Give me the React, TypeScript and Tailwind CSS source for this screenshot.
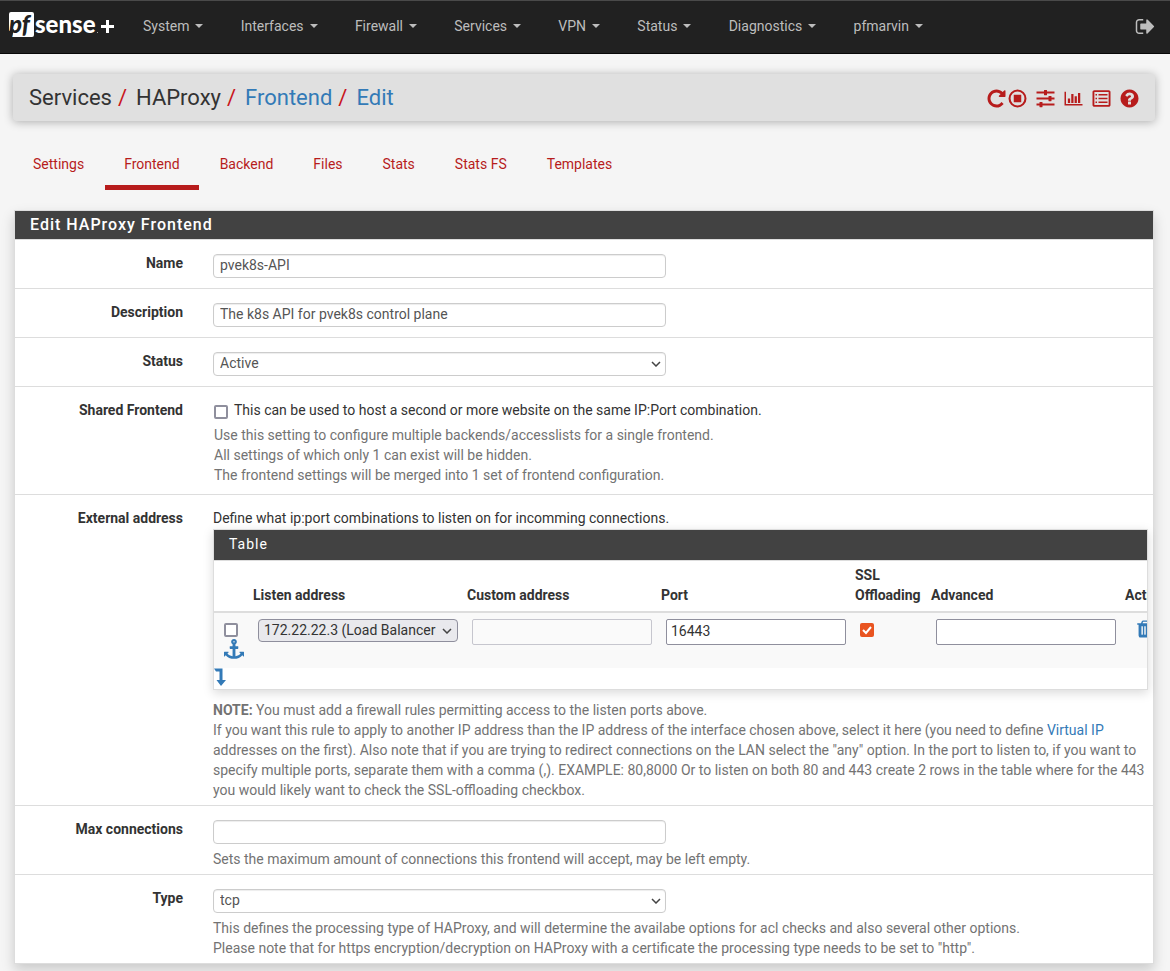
import type { ReactNode } from 'react';

const menus = ['System', 'Interfaces', 'Firewall', 'Services', 'VPN', 'Status', 'Diagnostics', 'pfmarvin'];
const tabs = ['Settings', 'Frontend', 'Backend', 'Files', 'Stats', 'Stats FS', 'Templates'];

const icons = {
    signOut: 'M704 1440q0 4 1 20t.5 26.5-3 23.5-10 19.5-20.5 6.5h-320q-119 0-203.5-84.5t-84.5-203.5v-704q0-119 84.5-203.5t203.5-84.5h320q13 0 22.5 9.5t9.5 22.5q0 4 1 20t.5 26.5-3 23.5-10 19.5-20.5 6.5h-320q-66 0-113 47t-47 113v704q0 66 47 113t113 47h312l11.5 1 11.5 3 8 5.5 7 9 2 13.5zm928-544q0 26-19 45l-544 544q-19 19-45 19t-45-19-19-45v-288h-448q-26 0-45-19t-19-45v-384q0-26 19-45t45-19h448v-288q0-26 19-45t45-19 45 19l544 544q19 19 19 45z',
    repeat: 'M1664 256v448q0 26-19 45t-45 19h-448q-42 0-59-40-17-39 14-69l138-138q-148-137-349-137-104 0-198.5 40.5t-163.5 109.5-109.5 163.5-40.5 198.5 40.5 198.5 109.5 163.5 163.5 109.5 198.5 40.5q119 0 225-52t179-147q7-10 23-12 15 0 25 9l137 138q9 8 9.5 20.5t-7.5 22.5q-109 132-264 204.5t-327 72.5q-156 0-298-61t-245-164-164-245-61-298 61-298 164-245 245-164 298-61q147 0 284.5 55.5t244.5 156.5l130-129q29-31 70-14 39 17 39 59z',
    stop: 'M1216 608v576q0 14-9 23t-23 9h-576q-14 0-23-9t-9-23v-576q0-14 9-23t23-9h576q14 0 23 9t9 23zM896 128a768 768 0 1 0 0 1536a768 768 0 1 0 0-1536zM896 304a592 592 0 1 1 0 1184a592 592 0 1 1 0-1184z',
    sliders: 'M128 299h640v-107q0-32 32-32h192q32 0 32 32v107h640v170h-640v107q0 32-32 32h-192q-32 0-32-32v-107h-640zM128 811h1024v-107q0-32 32-32h192q32 0 32 32v107h256v170h-256v107q0 32-32 32h-192q-32 0-32-32v-107h-1024zM128 1323h256v-107q0-32 32-32h192q32 0 32 32v107h1024v170h-1024v107q0 32-32 32h-192q-32 0-32-32v-107h-256z',
    chart: 'M608 896v384h-192v-384zM896 512v768h-192v-768zM1184 704v576h-192v-576zM1472 416v864h-192v-864zM1664 1366v128h-1536v-1174h128v1046z',
    list: 'M288 192h1216q66 0 113 47t47 113v1088q0 66-47 113t-113 47h-1216q-66 0-113-47t-47-113v-1088q0-66 47-113t113-47zM288 336v1120h1216v-1120zM384 512h128v128h-128zM384 832h128v128h-128zM384 1152h128v128h-128zM640 512h768v128h-768zM640 832h768v128h-768zM640 1152h768v128h-768z',
    help: 'M1024 1376v-192q0-14-9-23t-23-9h-192q-14 0-23 9t-9 23v192q0 14 9 23t23 9h192q14 0 23-9t9-23zm256-672q0-88-55.5-163t-138.5-116-170-41q-243 0-371 213-15 24 8 42l132 100q7 6 19 6 16 0 25-12 53-68 86-92 34-24 86-24 48 0 85.5 26t37.5 59q0 38-20 61t-68 45q-63 28-115.5 86.5t-52.5 125.5v36q0 14 9 23t23 9h192q14 0 23-9t9-23q0-19 21.5-49.5t54.5-49.5q32-18 49-28.5t46-35 44.5-48 28-60.5 12.5-81zm384 192q0 209-103 385.5t-279.5 279.5-385.5 103-385.5-103-279.5-279.5-103-385.5 103-385.5 279.5-279.5 385.5-103 385.5 103 279.5 279.5 103 385.5z',
    anchor: 'M960 256q0-26-19-45t-45-19-45 19-19 45 19 45 45 19 45-19 19-45zm832 928v352q0 22-20 30-8 2-12 2-13 0-23-9l-93-93q-119 143-318.5 226.5t-429.5 83.5-429.5-83.5-318.5-226.5l-93 93q-9 9-23 9-4 0-12-2-20-8-20-30v-352q0-14 9-23t23-9h352q22 0 30 20 8 19-7 35l-100 100q67 91 189.5 153.5t271.5 82.5v-647h-192q-26 0-45-19t-19-45v-128q0-26 19-45t45-19h192v-163q-58-34-93-92.5t-35-128.5q0-106 75-181t181-75 181 75 75 181q0 70-35 128.5t-93 92.5v163h192q26 0 45 19t19 45v128q0 26-19 45t-45 19h-192v647q149-20 271.5-82.5t189.5-153.5l-100-100q-15-16-7-35 8-20 30-20h352q14 0 23 9t9 23z',
    trash: 'M704 1376v-704q0-14-9-23t-23-9h-64q-14 0-23 9t-9 23v704q0 14 9 23t23 9h64q14 0 23-9t9-23zm256 0v-704q0-14-9-23t-23-9h-64q-14 0-23 9t-9 23v704q0 14 9 23t23 9h64q14 0 23-9t9-23zm256 0v-704q0-14-9-23t-23-9h-64q-14 0-23 9t-9 23v704q0 14 9 23t23 9h64q14 0 23-9t9-23zm-544-992h448l-48-117q-7-9-17-11h-317q-10 2-17 11zm928 32v64q0 14-9 23t-23 9h-96v948q0 83-47 143.5t-113 60.5h-832q-66 0-113-58.5t-47-141.5v-952h-96q-14 0-23-9t-9-23v-64q0-14 9-23t23-9h309l70-167q15-37 54-63t79-26h320q40 0 79 26t54 63l70 167h309q14 0 23 9t9 23z',
};

const shortcuts = [
    { icon: icons.stop, label: 'Stop service' },
    { icon: icons.sliders, label: 'Related settings' },
    { icon: icons.chart, label: 'Related status' },
    { icon: icons.list, label: 'Related log entries' },
    { icon: icons.help, label: 'Help' },
];

const inputClass = 'block h-6 w-full max-w-[453px] rounded border border-[#ccc] bg-white px-1.5 pb-0.5 text-sm text-[#555] shadow-[inset_0_1px_1px_rgba(0,0,0,0.075)]';
const checkboxClass = 'block size-3.5 shrink-0 appearance-none rounded-xs border-2 border-[#8f8f9d] bg-white';

function Icon({ d, className }: { d: string; className: string }) {
    return (
        <svg viewBox="0 0 1792 1792" fill="currentColor" fillRule="evenodd" className={className} aria-hidden="true">
            <path d={d} />
        </svg>
    );
}

function Chevron({ className }: { className: string }) {
    return (
        <svg viewBox="0 0 10 6" fill="none" stroke="#444" strokeWidth="1.5" className={className} aria-hidden="true">
            <path d="M1 1l4 4 4-4" />
        </svg>
    );
}

function Slash() {
    return <span className="px-1.5 text-[#c9151b]">/</span>;
}

function Logo() {
    return (
        <svg viewBox="0 0 108 36" className="h-9 w-[108px] overflow-visible" role="img" aria-label="pfSense plus">
            <path d="M3 4h21q2 0 2 2v21q0 2-2 2H4l2-8-5 2V6q0-2 2-2z" fill="#fff" />
            <text x="1" y="25" fontFamily="Lato, sans-serif" fontWeight="900" fontStyle="italic" fontSize="24" fill="#212121">pf</text>
            <text x="27" y="25" fontFamily="Lato, sans-serif" fontWeight="900" fontSize="24" fill="#fff">sense</text>
            <path d="M89 24h1v1h-1z" fill="#aaa" />
            <path d="M98 12h3v5h5v3h-5v5h-3v-5h-5v-3h5z" fill="#fff" />
        </svg>
    );
}

function FormRow({ label, htmlFor, children }: { label: string; htmlFor: string; children: ReactNode }) {
    return (
        <div className="grid grid-cols-[168px_minmax(0,1fr)] gap-[30px] border-b border-[#ddd] pr-[5px] last:border-b-0">
            <label htmlFor={htmlFor} className="pt-[13px] text-right font-bold">{label}</label>
            {children}
        </div>
    );
}

function SelectField({ id, value }: { id: string; value: string }) {
    return (
        <div className="relative max-w-[453px]">
            <select id={id} className={`${inputClass} appearance-none`}>
                <option>{value}</option>
            </select>
            <Chevron className="pointer-events-none absolute top-[9px] right-[5px] h-1.5 w-2.5" />
        </div>
    );
}

function AddressTable() {
    return (
        <div className="mt-px overflow-hidden border border-[#ddd] shadow-[0_3px_10px_rgba(0,0,0,0.15)]">
            <h3 className="border-b border-[#ddd] bg-[#424242] px-[15px] pt-1 pb-1.5 tracking-[1px] text-white">Table</h3>
            <table className="w-[974px] table-fixed border-collapse text-left">
                <colgroup>
                    <col className="w-[34px]" />
                    <col className="w-[214px]" />
                    <col className="w-[194px]" />
                    <col className="w-[194px]" />
                    <col className="w-[76px]" />
                    <col className="w-[194px]" />
                    <col className="w-[68px]" />
                </colgroup>
                <thead>
                    <tr className="border-b-2 border-[#ddd] align-bottom">
                        <th />
                        <th className="px-[5px] pt-1 pb-1.5">Listen address</th>
                        <th className="px-[5px] pt-1 pb-1.5">Custom address</th>
                        <th className="px-[5px] pt-1 pb-1.5">Port</th>
                        <th className="px-[5px] pt-1 pb-1.5">SSL Offloading</th>
                        <th className="px-[5px] pt-1 pb-1.5">Advanced</th>
                        <th className="px-[5px] pt-1 pb-1.5">Actions</th>
                    </tr>
                </thead>
                <tbody>
                    <tr className="h-14 bg-[#f9f9f9] align-top">
                        <td className="pt-2.5 pl-2.5">
                            <input type="checkbox" aria-label="Select row" className={checkboxClass} />
                            <button type="button" aria-label="Move checked rows here" className="mt-0.5 block text-[#337ab7]">
                                <Icon d={icons.anchor} className="size-5" />
                            </button>
                        </td>
                        <td className="pt-1.5 pl-2.5">
                            <div className="relative w-[200px]">
                                <select id="listen" aria-label="Listen address" className="block h-[23px] w-full appearance-none rounded border border-[#8f8f9d] bg-[#e9e9ed] px-[5px] pr-4 pb-0.5 text-sm">
                                    <option>172.22.22.3 (Load Balancer</option>
                                </select>
                                <Chevron className="pointer-events-none absolute top-[9px] right-1.5 h-1.5 w-2.5" />
                            </div>
                        </td>
                        <td className="pt-1.5 pl-2.5">
                            <input type="text" disabled aria-label="Custom address" className="block h-[26px] w-[180px] rounded-xs border border-[#c6c6ce] bg-[#fafafa] px-1" />
                        </td>
                        <td className="pt-1.5 pl-2.5">
                            <input type="text" defaultValue="16443" aria-label="Port" className="block h-[26px] w-[180px] rounded-xs border border-[#8f8f9d] bg-white px-1 pb-0.5" />
                        </td>
                        <td className="pt-2.5 pl-2.5">
                            <div className="relative size-3.5">
                                <input type="checkbox" defaultChecked aria-label="SSL Offloading" className="block size-3.5 appearance-none rounded-xs bg-[#e95420]" />
                                <svg viewBox="0 0 14 14" fill="none" stroke="#fff" strokeWidth="2" className="pointer-events-none absolute inset-0 size-3.5">
                                    <path d="M3 7l3 3 5-6" />
                                </svg>
                            </div>
                        </td>
                        <td className="pt-1.5 pl-2.5">
                            <input type="text" aria-label="Advanced" className="block h-[26px] w-[180px] rounded-xs border border-[#8f8f9d] bg-white px-1" />
                        </td>
                        <td className="pt-1.5 pl-[15px]">
                            <button type="button" aria-label="Delete" className="block text-[#337ab7]">
                                <Icon d={icons.trash} className="size-5" />
                            </button>
                        </td>
                    </tr>
                </tbody>
            </table>
            <button type="button" aria-label="Add row" className="flex h-[21px] items-start text-[#337ab7]">
                <svg viewBox="0 0 12 18" fill="currentColor" className="h-[18px] w-3" aria-hidden="true">
                    <path d="M0 .5h8.500v11.500H12L7 18 2.500 12H5.500V3.500H2z" />
                </svg>
            </button>
        </div>
    );
}

export default function App() {
    return (
        <div className="min-h-screen bg-[#f5f5f5] pb-5 font-[Roboto,'Noto_Sans',sans-serif] text-sm leading-5 text-[#333]">
            {/* Navbar */}
            <nav className="flex h-[54px] items-center border-t border-b border-t-[#4a4a4a] border-b-[#080808] bg-[#212121] pr-3.5 pb-0.5 pl-2 text-[#bdbdbd]">
                <a href="#" className="mr-2 shrink-0"><Logo /></a>
                <ul className="flex w-[817px] justify-between">
                    {menus.map((menu) => (
                        <li key={menu}>
                            <a href="#" className="flex items-center gap-1.5 pr-[18px] pl-[19px]">
                                {menu}
                                <span className="border-x-4 border-t-4 border-x-transparent" />
                            </a>
                        </li>
                    ))}
                </ul>
                <a href="#" aria-label="Logout" className="ml-auto"><Icon d={icons.signOut} className="size-[21px]" /></a>
            </nav>

            <div className="px-3.5">
                {/* Breadcrumb */}
                <header className="mt-5 mr-px -ml-px flex h-[47px] items-center justify-between rounded-sm bg-[#e0e0e0] pt-px pr-[15px] pl-4 shadow-[0_1px_10px_rgba(0,0,0,0.3)]">
                    <ol className="flex gap-[3px] text-[22px]">
                        <li>Services<Slash /></li>
                        <li>HAProxy<Slash /></li>
                        <li><a href="#" className="text-[#337ab7]">Frontend</a><Slash /></li>
                        <li><a href="#" className="text-[#337ab7]">Edit</a></li>
                    </ol>
                    <div className="flex text-[#b71c1c]">
                        <a href="#" aria-label="Restart service"><Icon d={icons.repeat} className="size-[21px]" /></a>
                        <div className="flex gap-[7px]">
                            {shortcuts.map((s) => (
                                <a key={s.label} href="#" aria-label={s.label}><Icon d={s.icon} className="size-[21px]" /></a>
                            ))}
                        </div>
                    </div>
                </header>

                {/* Tabs */}
                <ul className="mt-[17px] flex gap-0.5 text-[#b71c1c]">
                    {tabs.map((tab) => (
                        <li key={tab}>
                            <a href="#" className={`block border-b-5 px-[19px] pt-4 pb-[11px] ${tab === 'Frontend' ? 'border-[#b71c1c]' : 'border-transparent'}`}>{tab}</a>
                        </li>
                    ))}
                </ul>

                {/* Form */}
                <form className="mt-5 mr-0.5 border border-[#ddd] bg-white shadow-[0_6px_12px_rgba(0,0,0,0.175)]">
                    <h2 className="border-b border-[#ddd] bg-[#424242] px-[15px] py-1 text-base leading-5 font-medium tracking-[1px] text-white">Edit HAProxy Frontend</h2>
                    <FormRow label="Name" htmlFor="name">
                        <div className="pt-3.5 pb-2.5">
                            <input id="name" type="text" defaultValue="pvek8s-API" className={inputClass} />
                        </div>
                    </FormRow>
                    <FormRow label="Description" htmlFor="desc">
                        <div className="pt-3.5 pb-2.5">
                            <input id="desc" type="text" defaultValue="The k8s API for pvek8s control plane" className={inputClass} />
                        </div>
                    </FormRow>
                    <FormRow label="Status" htmlFor="status">
                        <div className="pt-3.5 pb-2.5">
                            <SelectField id="status" value="Active" />
                        </div>
                    </FormRow>
                    <FormRow label="Shared Frontend" htmlFor="shared">
                        <div className="pt-[13px] pb-[9px] pl-px">
                            <label className="flex items-center gap-1.5">
                                <input id="shared" type="checkbox" className={`${checkboxClass} mt-1`} />
                                This can be used to host a second or more website on the same IP:Port combination.
                            </label>
                            <p className="mt-[5px] text-[#737373]">
                                Use this setting to configure multiple backends/accesslists for a single frontend.<br />
                                All settings of which only 1 can exist will be hidden.<br />
                                The frontend settings will be merged into 1 set of frontend configuration.
                            </p>
                        </div>
                    </FormRow>
                    <FormRow label="External address" htmlFor="listen">
                        <div className="pt-[13px] pb-[5px]">
                            Define what ip:port combinations to listen on for incomming connections.
                            <AddressTable />
                            <p className="mt-2.5 text-[#737373]">
                                <b>NOTE:</b> You must add a firewall rules permitting access to the listen ports above.<br />
                                If you want this rule to apply to another IP address than the IP address of the interface chosen above, select it here (you need to define <a href="#" className="text-[#337ab7]">Virtual IP</a> addresses on the first). Also note that if you are trying to redirect connections on the LAN select the "any" option. In the port to listen to, if you want to specify multiple ports, separate them with a comma (,). EXAMPLE: 80,8000 Or to listen on both 80 and 443 create 2 rows in the table where for the 443 you would likely want to check the SSL-offloading checkbox.
                            </p>
                        </div>
                    </FormRow>
                    <FormRow label="Max connections" htmlFor="maxconn">
                        <div className="pt-3.5 pb-[5px]">
                            <input id="maxconn" type="text" className={inputClass} />
                            <p className="mt-[5px] text-[#737373]">Sets the maximum amount of connections this frontend will accept, may be left empty.</p>
                        </div>
                    </FormRow>
                    <FormRow label="Type" htmlFor="type">
                        <div className="pt-3.5 pb-[5px]">
                            <SelectField id="type" value="tcp" />
                            <p className="mt-[5px] text-[#737373]">
                                This defines the processing type of HAProxy, and will determine the availabe options for acl checks and also several other options.<br />
                                Please note that for https encryption/decryption on HAProxy with a certificate the processing type needs to be set to "http".
                            </p>
                        </div>
                    </FormRow>
                </form>
            </div>
        </div>
    );
}
